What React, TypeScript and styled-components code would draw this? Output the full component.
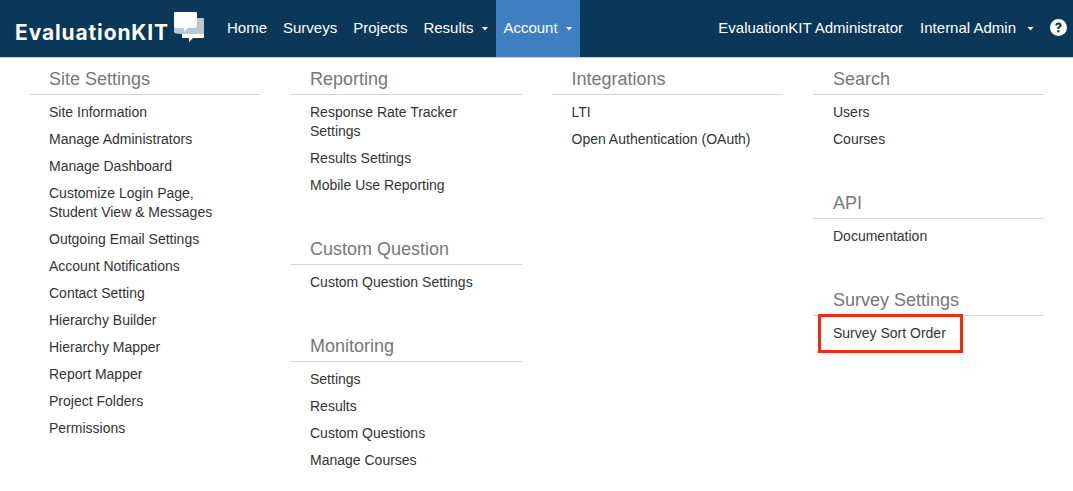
import React from 'react';
import styled, { createGlobalStyle } from 'styled-components';

const NAVY = '#0b3858';
const BLUE = '#3d7fc1';
const GREY = '#777777';
const LINE = '#d4d4d4';
const TEXT = '#333333';

type MenuGroup = { title: string; items: string[] };

const COLUMNS: { inset: number; groups: MenuGroup[] }[] = [
  {
    inset: 19,
    groups: [
      {
        title: 'Site Settings',
        items: [
          'Site Information',
          'Manage Administrators',
          'Manage Dashboard',
          'Customize Login Page,\nStudent View & Messages',
          'Outgoing Email Settings',
          'Account Notifications',
          'Contact Setting',
          'Hierarchy Builder',
          'Hierarchy Mapper',
          'Report Mapper',
          'Project Folders',
          'Permissions',
        ],
      },
    ],
  },
  {
    inset: 20,
    groups: [
      {
        title: 'Reporting',
        items: [
          'Response Rate Tracker\nSettings',
          'Results Settings',
          'Mobile Use Reporting',
        ],
      },
      { title: 'Custom Question', items: ['Custom Question Settings'] },
      {
        title: 'Monitoring',
        items: ['Settings', 'Results', 'Custom Questions', 'Manage Courses'],
      },
    ],
  },
  {
    inset: 19.5,
    groups: [
      { title: 'Integrations', items: ['LTI', 'Open Authentication (OAuth)'] },
    ],
  },
  {
    inset: 20,
    groups: [
      { title: 'Search', items: ['Users', 'Courses'] },
      { title: 'API', items: ['Documentation'] },
      { title: 'Survey Settings', items: ['Survey Sort Order'] },
    ],
  },
];

const LEFT_LINKS = [
  { label: 'Home' },
  { label: 'Surveys' },
  { label: 'Projects' },
  { label: 'Results', caret: true },
  { label: 'Account', caret: true, active: true },
];

function Logo() {
  return (
    <LogoWrapper>
      <LogoText>EvaluationKIT</LogoText>
      <svg width="30" height="30" viewBox="0 0 30 30">
        <path
          d="M0 16h23V6h6a1 1 0 0 1 1 1v15H7l-5-.5a2 2 0 0 1-2-2z"
          fill="#b9c7d2"
        />
        <path
          d="M1 0h21a1 1 0 0 1 1 1v14a1 1 0 0 1-1 1h-8l-4 4v-4H1a1 1 0 0 1-1-1V1a1 1 0 0 1 1-1z"
          fill="#ffffff"
        />
        <path
          d="M8 22h22v3a1 1 0 0 1-1 1H19l-4 4v-4H9a1 1 0 0 1-1-1z"
          fill="#ffffff"
        />
      </svg>
    </LogoWrapper>
  );
}

function HelpIcon() {
  return (
    <svg width="17" height="17" viewBox="0 0 17 17">
      <circle cx="8.500" cy="8.500" r="8.500" fill="#ffffff" />
      <path
        d="M5.300 6.500c.1-1.800 1.400-2.900 3.200-2.900 1.800 0 3.200 1 3.200 2.600 0 1.100-.6 1.700-1.400 2.200-.7.400-1 .7-1 1.300v.4H7.300v-.6c0-1 .4-1.600 1.200-2.100.6-.4.900-.6.900-1.100 0-.5-.4-.8-.9-.8-.6 0-1 .4-1.100 1z"
        fill={NAVY}
      />
      <rect x="7.300" y="11.100" width="2.100" height="2.200" fill={NAVY} />
    </svg>
  );
}

export default function App() {
  return (
    <Page>
      <GlobalStyle />
      <NavBar>
        <Logo />
        <NavLinks>
          {LEFT_LINKS.map(({ label, caret, active }) => (
            <NavLink key={label} $active={active}>
              {label}
              {caret && <Caret />}
            </NavLink>
          ))}
        </NavLinks>
        <NavRight>
          <UserName>EvaluationKIT Administrator</UserName>
          <RoleLink>
            Internal Admin
            <RoleCaret />
          </RoleLink>
          <HelpButton>
            <HelpIcon />
          </HelpButton>
        </NavRight>
      </NavBar>
      <Menu>
        {COLUMNS.map(({ inset, groups }) => (
          <Column key={groups[0].title}>
            {groups.map(({ title, items }) => (
              <Group key={title}>
                <GroupTitle $inset={inset}>{title}</GroupTitle>
                <ItemList $inset={inset}>
                  {items.map((item) => (
                    <Item key={item} $marked={item === 'Survey Sort Order'}>
                      {item}
                    </Item>
                  ))}
                </ItemList>
              </Group>
            ))}
          </Column>
        ))}
      </Menu>
    </Page>
  );
}

const GlobalStyle = createGlobalStyle`
  html, body {
    margin: 0;
    background: #ffffff;
  }
`;

const Page = styled.div`
  width: 1073px;
  height: 491px;
  overflow: hidden;
  font-family: 'Liberation Sans', Arial, sans-serif;
  color: ${TEXT};
`;

const NavBar = styled.header`
  display: flex;
  align-items: stretch;
  height: 58px;
  background: ${NAVY};
  border-bottom: 1px solid #c5ced6;
  box-sizing: border-box;
  color: #ffffff;
  font-size: 15px;
`;

const LogoWrapper = styled.div`
  display: flex;
  align-items: flex-start;
  gap: 5px;
  width: 219px;
  padding: 12px 0 0 15px;
  box-sizing: border-box;
`;

const LogoText = styled.span`
  margin-top: 9px;
  font-family: Inter, Lato, sans-serif;
  font-size: 21px;
  line-height: 24px;
  font-weight: 700;
  letter-spacing: 0.87px;
`;

const NavLinks = styled.nav`
  display: flex;
`;

const NavLink = styled.a<{ $active?: boolean }>`
  display: flex;
  align-items: center;
  padding: 0 ${({ $active }) => ($active ? '7px' : '8px')} 2px
    ${({ $active }) => ($active ? '7px' : '8px')};
  background: ${({ $active }) => ($active ? BLUE : 'transparent')};
`;

const Caret = styled.span`
  width: 7px;
  height: 4px;
  margin: 2px 0 0 8px;
  background: #ffffff;
  clip-path: polygon(0 0, 100% 0, 50% 100%);
`;

const RoleCaret = styled(Caret)`
  margin-left: 11px;
`;

const NavRight = styled.div`
  display: flex;
  align-items: center;
  margin-left: auto;
  padding: 0 6px 2px 0;
`;

const UserName = styled.span`
  margin-right: 17px;
`;

const RoleLink = styled.a`
  display: flex;
  align-items: center;
  margin-right: 16px;
`;

const HelpButton = styled.span`
  display: flex;
`;

const Menu = styled.main`
  display: grid;
  grid-template-columns: 260px 262px 261px 261px;
  padding: 0 15px;
`;

const Column = styled.section`
  display: flex;
  flex-direction: column;
  gap: 44px;
  padding: 11px 15px 0;
`;

const Group = styled.div`
  display: flex;
  flex-direction: column;
`;

const GroupTitle = styled.h4<{ $inset: number }>`
  margin: 0 0 4px;
  padding: 0 0 5px ${({ $inset }) => $inset}px;
  border-bottom: 1px solid ${LINE};
  color: ${GREY};
  font-size: 18px;
  line-height: 20px;
  font-weight: 400;
`;

const ItemList = styled.ul<{ $inset: number }>`
  display: flex;
  flex-direction: column;
  align-items: flex-start;
  gap: 8px;
  margin: 0;
  padding: 4px 0 0 ${({ $inset }) => $inset}px;
  list-style: none;
`;

const Item = styled.li<{ $marked?: boolean }>`
  position: relative;
  font-size: 14px;
  line-height: 19px;
  white-space: pre-line;

  ${({ $marked }) =>
    $marked &&
    `
    &::after {
      content: '';
      position: absolute;
      left: -15px;
      right: -17px;
      top: -10px;
      bottom: -10px;
      border: 3px solid #f4290f;
    }
  `}
`;
